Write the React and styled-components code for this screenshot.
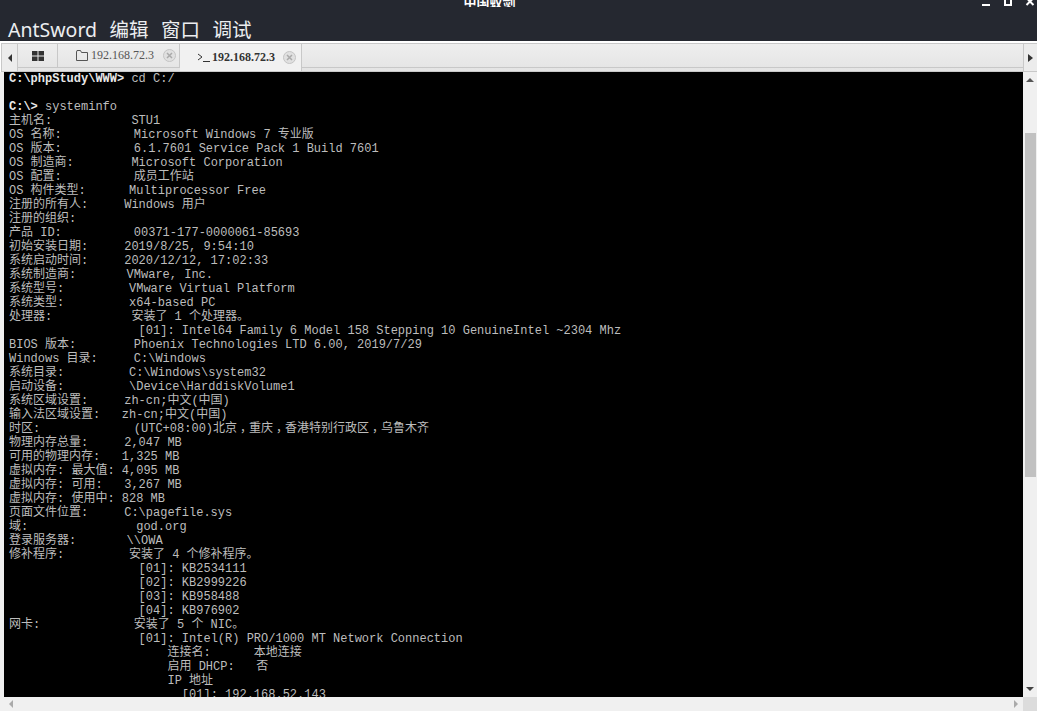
import React from "react";
import styled, { createGlobalStyle } from "styled-components";

const Global = createGlobalStyle`
  html, body { margin: 0; padding: 0; height: 100%; overflow: hidden; background: #f0f0f0; }
  #root { height: 100%; }
`;

const Page = styled.div`
  width: 1037px; height: 711px; display: flex; flex-direction: column; overflow: hidden;
  font-family: "Liberation Sans", sans-serif;
`;
const TitleBar = styled.header`
  height: 41px; flex: none; background: #252830; color: #fff; display: flex; flex-direction: column; position: relative;
`;
const WindowTitle = styled.div`
  height: 9px; overflow: hidden; padding-right: 58px; text-align: center; font: 700 13px/9px "Noto Sans CJK SC", sans-serif; color: #fff;
  span { display: block; margin-top: -5px; line-height: 14px; }
`;
const WindowControls = styled.svg`
  position: absolute; top: 0; right: 0; display: block;
`;
const Menu = styled.nav`
  display: flex; gap: 12.5px; padding: 12px 0 0 8px; font: 400 19.5px/22px "Noto Sans", "Noto Sans CJK SC", sans-serif; color: #eceef0;
`;
const TabStrip = styled.div`
  height: 31px; flex: none; box-sizing: border-box; background: #fff; padding: 2px 0 0 1px; display: flex;
`;
const TabRail = styled.div`
  flex: 1; display: flex; height: 29px; box-sizing: border-box; background: linear-gradient(#eeeeee, #e4e4e4);
  border-top: 1px solid #c8c8c8; border-bottom: 1px solid #c8c8c8; border-left: 1px solid #c8c8c8; align-items: stretch;
`;
const Arrow = styled.button`
  width: ${p => p.$w}px; flex: none; padding: 0; border: 0; background: #ececec; display: flex; align-items: center; justify-content: center;
  ${p => p.$right ? "border-left: 1px solid #c8c8c8;" : "border-right: 1px solid #c8c8c8;"}
`;
const Tabs = styled.div`
  flex: 1; display: flex; align-items: flex-start; height: 23px; border-bottom: 1px solid #c8c8c8; box-sizing: content-box;
`;
const Tab = styled.div`
  width: ${p => p.$w}px; flex: none; box-sizing: border-box; display: flex; align-items: center;
  justify-content: ${p => p.$center ? "center" : "flex-start"};
  padding-left: ${p => p.$center ? 0 : p.$pad}px;
  gap: ${p => p.$gap || 2}px; border-right: 1px solid #c8c8c8; height: ${p => p.$active ? 27 : 23}px;
  background: ${p => p.$active ? "#f1f1f1" : "transparent"};
  font: ${p => p.$active ? 700 : 400} 12px/14px "Liberation Serif", serif;
  color: ${p => p.$active ? "#333" : "#555"};
`;
const TabLabel = styled.span`
  position: relative; top: -1px;
`;
const Close = styled.span`
  width: 13px; height: 13px; border-radius: 50%; background: #e0e0e0; border: 1px solid #c4c4c4; box-sizing: border-box;
  margin-left: 6px; display: flex; align-items: center; justify-content: center; flex: none;
`;
const Middle = styled.div`
  flex: 1; min-height: 0; display: flex; padding-left: 4px; background: #f0f0f0;
`;
const Terminal = styled.pre`
  flex: 1; margin: 0; background: #000; color: #bdbdbd; overflow: hidden; padding: 0 0 0 5px;
  font: 400 12px/14px "Liberation Mono", "Noto Sans CJK SC", monospace;
  b { color: #e8e8e8; font-weight: 700; }
`;
const Comma = styled.span`
  font-feature-settings: "halt"; padding: 0 3px;
`;
const VScroll = styled.div`
  width: 14px; flex: none; display: flex; flex-direction: column; align-items: center; background: #f0f0f0; padding-top: 6px; box-sizing: border-box;
`;
const Spacer = styled.div`
  height: ${p => p.$h}px; flex: none;
`;
const Thumb = styled.div`
  width: 11px; height: 344px; flex: none; background: #c1c1c1;
`;
const HScroll = styled.div`
  height: 14px; flex: none; display: flex; align-items: center; background: #f0f0f0;
`;
const Grow = styled.div`flex: 1;`;
const Corner = styled.div`width: 14px; height: 14px; background: #dcdcdc; flex: none;`;
const HArrow = styled.svg`flex: none; margin: ${p => p.$m};`;
const DownArrow = styled.svg`flex: none; margin-bottom: 6px;`;

const lines = [
  <><b>C:\phpStudy\WWW&gt;</b> cd C:/</>,
  "",
  <><b>C:\&gt;</b> systeminfo</>,
  "主机名:           STU1",
  "OS 名称:          Microsoft Windows 7 专业版",
  "OS 版本:          6.1.7601 Service Pack 1 Build 7601",
  "OS 制造商:        Microsoft Corporation",
  "OS 配置:          成员工作站",
  "OS 构件类型:      Multiprocessor Free",
  "注册的所有人:     Windows 用户",
  "注册的组织:",
  "产品 ID:          00371-177-0000061-85693",
  "初始安装日期:     2019/8/25, 9:54:10",
  "系统启动时间:     2020/12/12, 17:02:33",
  "系统制造商:       VMware, Inc.",
  "系统型号:         VMware Virtual Platform",
  "系统类型:         x64-based PC",
  "处理器:           安装了 1 个处理器。",
  "                  [01]: Intel64 Family 6 Model 158 Stepping 10 GenuineIntel ~2304 Mhz",
  "BIOS 版本:        Phoenix Technologies LTD 6.00, 2019/7/29",
  "Windows 目录:     C:\\Windows",
  "系统目录:         C:\\Windows\\system32",
  "启动设备:         \\Device\\HarddiskVolume1",
  "系统区域设置:     zh-cn;中文(中国)",
  "输入法区域设置:   zh-cn;中文(中国)",
  <>时区:             (UTC+08:00)北京<Comma>，</Comma>重庆<Comma>，</Comma>香港特别行政区<Comma>，</Comma>乌鲁木齐</>,
  "物理内存总量:     2,047 MB",
  "可用的物理内存:   1,325 MB",
  "虚拟内存: 最大值: 4,095 MB",
  "虚拟内存: 可用:   3,267 MB",
  "虚拟内存: 使用中: 828 MB",
  "页面文件位置:     C:\\pagefile.sys",
  "域:               god.org",
  "登录服务器:       \\\\OWA",
  "修补程序:         安装了 4 个修补程序。",
  "                  [01]: KB2534111",
  "                  [02]: KB2999226",
  "                  [03]: KB958488",
  "                  [04]: KB976902",
  "网卡:             安装了 5 个 NIC。",
  "                  [01]: Intel(R) PRO/1000 MT Network Connection",
  "                      连接名:      本地连接",
  "                      启用 DHCP:   否",
  "                      IP 地址",
  "                        [01]: 192.168.52.143",
];

const CloseIcon = () => (
  <Close><svg width="7" height="7" viewBox="0 0 7 7"><path d="M1 1l5 5M6 1l-5 5" stroke="#aaa" strokeWidth="1.5" /></svg></Close>
);

export default function App() {
  return (
    <Page>
      <Global />
      <TitleBar>
        <WindowTitle><span>中国蚁剑</span></WindowTitle>
        <WindowControls width="100" height="7" viewBox="0 0 100 7">
          <rect x="45" y="4" width="8" height="2" fill="#fff" />
          <path d="M68 -1v6h6v-6" fill="none" stroke="#fff" strokeWidth="2" />
          <path d="M89.500 -2l7 7M96.500 -2l-7 7" stroke="#fff" strokeWidth="2" />
        </WindowControls>
        <Menu>
          <span>AntSword</span><span>编辑</span><span>窗口</span><span>调试</span>
        </Menu>
      </TitleBar>
      <TabStrip>
        <TabRail>
          <Arrow $w={16} aria-label="left">
            <svg width="4" height="8" viewBox="0 0 4 8"><path d="M4 0v8L0 4z" fill="#333" /></svg>
          </Arrow>
          <Tabs>
            <Tab $w={40} $center>
              <svg width="12" height="10" viewBox="0 0 12 10" fill="#333">
                <rect x="0" y="0" width="5.500" height="4.500" /><rect x="6.500" y="0" width="5.500" height="4.500" />
                <rect x="0" y="5.500" width="5.500" height="4.500" /><rect x="6.500" y="5.500" width="5.500" height="4.500" />
              </svg>
            </Tab>
            <Tab $w={122} $pad={18} $gap={3}>
              <svg width="12" height="11" viewBox="0 0 12 11" fill="none" stroke="#555"><path d="M.5 2V10.5H11.5V2.5H5.500L4.500 .5H1Z" /></svg>
              <TabLabel>192.168.72.3</TabLabel>
              <CloseIcon />
            </Tab>
            <Tab $w={122} $pad={17} $active>
              <svg width="13" height="9" viewBox="0 0 13 9" fill="none" stroke="#333"><path d="M1 1l4 3-4 3M6 8.500h7" /></svg>
              <TabLabel>192.168.72.3</TabLabel>
              <CloseIcon />
            </Tab>
          </Tabs>
          <Arrow $w={14} $right aria-label="right">
            <svg width="5" height="8" viewBox="0 0 5 8"><path d="M0 0v8l5-4z" fill="#333" /></svg>
          </Arrow>
        </TabRail>
      </TabStrip>
      <Middle>
        <Terminal>
          {lines.map((l, i) => <React.Fragment key={i}>{l}{"\n"}</React.Fragment>)}
        </Terminal>
        <VScroll>
          <svg width="8" height="4" viewBox="0 0 8 4"><path d="M4 0l4 4H0z" fill="#555" /></svg>
          <Spacer $h={51} />
          <Thumb />
          <Grow />
          <DownArrow width="8" height="4" viewBox="0 0 8 4"><path d="M0 0h8L4 4z" fill="#444" /></DownArrow>
        </VScroll>
      </Middle>
      <HScroll>
        <HArrow $m="0 0 0 9px" width="4" height="8" viewBox="0 0 4 8"><path d="M4 0v8L0 4z" fill="#aaa" /></HArrow>
        <Grow />
        <HArrow $m="0 5px 0 0" width="4" height="8" viewBox="0 0 4 8"><path d="M0 0v8l4-4z" fill="#aaa" /></HArrow>
        <Corner />
      </HScroll>
    </Page>
  );
}
